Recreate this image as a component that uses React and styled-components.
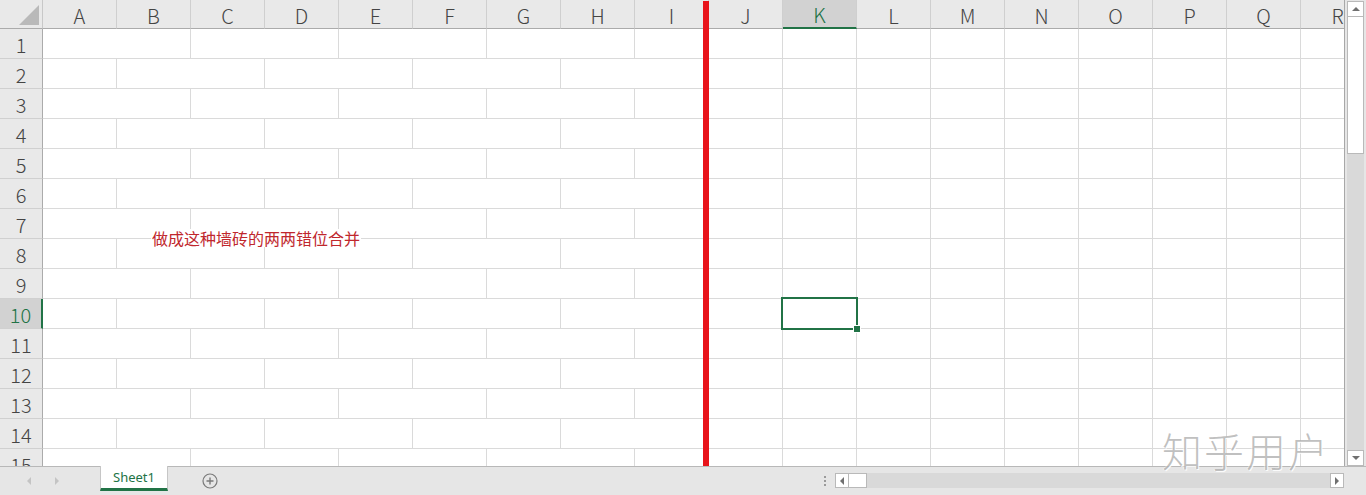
import React from "react";
import styled, { createGlobalStyle } from "styled-components";

const GlobalStyle = createGlobalStyle`
  html, body {
    margin: 0;
    padding: 0;
    background: #ffffff;
  }
  body {
    font-family: "Noto Sans CJK SC", "Noto Sans", sans-serif;
  }
`;

const GREEN = "#217346";
const LINE = "#dadada";

const Window = styled.div`
  position: relative;
  width: 1366px;
  height: 495px;
  overflow: hidden;
  display: flex;
  flex-direction: column;
  background: #e6e6e6;
`;

const SheetArea = styled.div`
  display: flex;
  height: 467px;
  border-bottom: 1px solid #b8b8b8;
  box-sizing: border-box;
`;

const GridPane = styled.div`
  position: relative;
  flex: 0 0 1345px;
  overflow: hidden;
  background: #ffffff;
  border-right: 1px solid #a8a8a8;
  box-sizing: border-box;
`;

const Row = styled.div`
  display: grid;
  grid-template-columns: 43px repeat(18, 74px);
  grid-template-rows: ${(p) => p.$height}px;
  height: ${(p) => p.$height}px;
  line-height: 1;
`;

const Corner = styled.div`
  background: #e9e9e9;
  border-right: 1px solid #c8c8c8;
  border-bottom: 1px solid #ababab;
  display: flex;
  align-items: flex-end;
  justify-content: flex-end;
  padding: 0 3px 3px 0;
  box-sizing: border-box;
`;

const CornerTriangle = styled.div`
  width: 0;
  height: 0;
  border-left: 20px solid transparent;
  border-bottom: 20px solid #b9b9b9;
`;

const ColHeader = styled.div`
  background: ${(p) => (p.$active ? "#d2d2d2" : "#e9e9e9")};
  color: ${(p) => (p.$active ? GREEN : "#444444")};
  border-right: 1px solid #cfcfcf;
  border-bottom: ${(p) => (p.$active ? `2px solid ${GREEN}` : "1px solid #ababab")};
  box-sizing: border-box;
  display: flex;
  align-items: center;
  justify-content: center;
  font-size: 20px;
  font-weight: 300;
  padding-top: 3px;
`;

const RowHeader = styled.div`
  background: ${(p) => (p.$active ? "#d2d2d2" : "#e9e9e9")};
  color: ${(p) => (p.$active ? GREEN : "#444444")};
  border-right: ${(p) => (p.$active ? `2px solid ${GREEN}` : "1px solid #ababab")};
  border-bottom: 1px solid #d0d0d0;
  box-sizing: border-box;
  display: flex;
  align-items: center;
  justify-content: center;
  font-size: 20px;
  font-weight: 300;
  padding-top: 3px;
`;

const Cell = styled.div`
  position: relative;
  grid-column: span ${(p) => p.$span};
  border-right: 1px solid ${LINE};
  border-bottom: 1px solid ${LINE};
  box-sizing: border-box;
`;

const Selection = styled.div`
  position: absolute;
  top: -2px;
  left: -2px;
  right: -2px;
  bottom: -2px;
  border: 2px solid ${GREEN};
  z-index: 2;
`;

const FillHandle = styled.div`
  position: absolute;
  right: -5px;
  bottom: -5px;
  width: 6px;
  height: 6px;
  background: ${GREEN};
  border: 1px solid #ffffff;
`;

const Divider = styled.div`
  position: absolute;
  top: 1px;
  bottom: 0;
  left: 703px;
  width: 6px;
  background: #e8141b;
  z-index: 3;
`;

const Note = styled.div`
  position: absolute;
  left: 151px;
  top: 229px;
  height: 18px;
  line-height: 18px;
  padding: 0 1px;
  background: #ffffff;
  color: #c0272d;
  font-size: 16px;
  white-space: nowrap;
  z-index: 2;
`;

const VScroll = styled.div`
  flex: 1;
  display: flex;
  flex-direction: column;
  padding: 1px 2px 0 2px;
  background: #e6e6e6;
`;

const ScrollButton = styled.div`
  flex: 0 0 auto;
  width: ${(p) => p.$w}px;
  height: ${(p) => p.$h}px;
  background: #ffffff;
  border: 1px solid #b9b9b9;
  box-sizing: border-box;
  display: flex;
  align-items: center;
  justify-content: center;
`;

const Arrow = styled.div`
  width: 0;
  height: 0;
  ${(p) =>
    p.$dir === "up"
      ? "border-left: 4px solid transparent; border-right: 4px solid transparent; border-bottom: 4px solid #707070;"
      : p.$dir === "down"
      ? "border-left: 4px solid transparent; border-right: 4px solid transparent; border-top: 4px solid #707070;"
      : p.$dir === "left"
      ? "border-top: 4px solid transparent; border-bottom: 4px solid transparent; border-right: 4px solid #707070;"
      : "border-top: 4px solid transparent; border-bottom: 4px solid transparent; border-left: 4px solid #707070;"}
`;

const VThumb = styled.div`
  height: 137px;
  background: #ffffff;
  border: 1px solid #b9b9b9;
  border-top: none;
  box-sizing: border-box;
`;

const Track = styled.div`
  flex: 1;
  background: #d9d9d9;
`;

const BottomBar = styled.div`
  flex: 1;
  display: flex;
  align-items: stretch;
  background: #e6e6e6;
`;

const NavGroup = styled.div`
  width: 100px;
  display: flex;
  align-items: center;
  gap: 24px;
  padding-left: 27px;
  box-sizing: border-box;
`;

const NavArrow = styled.div`
  width: 0;
  height: 0;
  border-top: 4px solid transparent;
  border-bottom: 4px solid transparent;
  ${(p) =>
    p.$dir === "left"
      ? "border-right: 4px solid #c4c4c4;"
      : "border-left: 4px solid #c4c4c4;"}
`;

const SheetTab = styled.div`
  width: 68px;
  height: 25px;
  margin-top: -1px;
  background: #ffffff;
  border-left: 1px solid #c6c6c6;
  border-right: 1px solid #c6c6c6;
  border-bottom: 3px solid ${GREEN};
  box-sizing: border-box;
  display: flex;
  align-items: center;
  justify-content: center;
  color: ${GREEN};
  font-family: "Noto Sans", sans-serif;
  font-size: 13px;
`;

const AddSheet = styled.div`
  width: 84px;
  display: flex;
  align-items: center;
  justify-content: center;
`;

const Dots = styled.div`
  margin-left: auto;
  width: 20px;
  display: flex;
  flex-direction: column;
  align-items: center;
  justify-content: center;
  gap: 2px;
`;

const Dot = styled.div`
  width: 2px;
  height: 2px;
  background: #9a9a9a;
`;

const HScroll = styled.div`
  width: 509px;
  margin-right: 22px;
  margin-top: 6px;
  height: 15px;
  display: flex;
`;

const HThumb = styled.div`
  width: 18px;
  background: #ffffff;
  border: 1px solid #b9b9b9;
  border-left: none;
  box-sizing: border-box;
`;

const Watermark = styled.div`
  position: absolute;
  left: 1162px;
  top: 421px;
  font-size: 40px;
  font-weight: 300;
  letter-spacing: 2px;
  color: rgba(150, 150, 150, 0.6);
  text-shadow: 1px 1px 0 rgba(255, 255, 255, 0.9), -1px 0 0 rgba(255, 255, 255, 0.5);
  white-space: nowrap;
  z-index: 5;
`;

const COLUMNS = "ABCDEFGHIJKLMNOPQR".split("");
const ROWS = Array.from({ length: 15 }, (_, i) => i + 1);

// brick pattern left of column J, plain cells to the right
const spansFor = (row) => {
  const left = row % 2 === 1 ? [2, 2, 2, 2, 1] : [1, 2, 2, 2, 2];
  return [...left, ...Array(9).fill(1)];
};

const ActiveRow = 10;
const ActiveCol = "K";

const App = () => {
  return (
    <Window>
      <GlobalStyle />
      <SheetArea>
        <GridPane>
          <Row $height={29}>
            <Corner>
              <CornerTriangle />
            </Corner>
            {COLUMNS.map((c) => (
              <ColHeader key={c} $active={c === ActiveCol}>
                {c}
              </ColHeader>
            ))}
          </Row>
          {ROWS.map((r) => (
            <Row key={r} $height={30}>
              <RowHeader $active={r === ActiveRow}>{r}</RowHeader>
              {spansFor(r).map((span, i) => (
                <Cell key={i} $span={span}>
                  {r === ActiveRow && i === 6 && (
                    <Selection>
                      <FillHandle />
                    </Selection>
                  )}
                </Cell>
              ))}
            </Row>
          ))}
          <Note>做成这种墙砖的两两错位合并</Note>
          <Divider />
        </GridPane>
        <VScroll>
          <ScrollButton $w={17} $h={16}>
            <Arrow $dir="up" />
          </ScrollButton>
          <VThumb />
          <Track />
          <ScrollButton $w={17} $h={16}>
            <Arrow $dir="down" />
          </ScrollButton>
        </VScroll>
      </SheetArea>
      <BottomBar>
        <NavGroup>
          <NavArrow $dir="left" />
          <NavArrow $dir="right" />
        </NavGroup>
        <SheetTab>Sheet1</SheetTab>
        <AddSheet>
          <svg width="16" height="16" viewBox="0 0 16 16">
            <circle cx="8" cy="8" r="7" fill="none" stroke="#7a7a7a" strokeWidth="1.2" />
            <path d="M8 4.5v7M4.5 8h7" stroke="#7a7a7a" strokeWidth="1.4" />
          </svg>
        </AddSheet>
        <Dots>
          <Dot />
          <Dot />
          <Dot />
        </Dots>
        <HScroll>
          <ScrollButton $w={14} $h={15}>
            <Arrow $dir="left" />
          </ScrollButton>
          <HThumb />
          <Track />
          <ScrollButton $w={14} $h={15}>
            <Arrow $dir="right" />
          </ScrollButton>
        </HScroll>
      </BottomBar>
      <Watermark>知乎用户</Watermark>
    </Window>
  );
};

export default App;
